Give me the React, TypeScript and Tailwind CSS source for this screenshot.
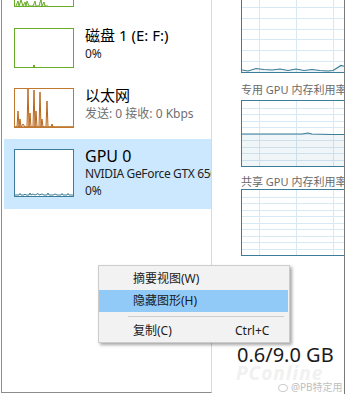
const FONT = "font-['Noto_Sans','Noto_Sans_CJK_SC',sans-serif]";

function GridChart({
  height,
  hLines,
  line,
  fill,
}: {
  height: number;
  hLines: number[];
  line?: string;
  fill?: string;
}) {
  const inner = height - 2;
  return (
    <div
      className="w-[120px] shrink-0 border border-[#3b7c98] bg-white"
      style={{ height }}
    >
      <svg width="118" height={inner} className="block">
        {hLines.map((y) => (
          <line key={`h${y}`} x1="0" x2="118" y1={y} y2={y} stroke="#d7e9f4" strokeWidth="1" />
        ))}
        {[17.5, 54.5, 91.5].map((x) => (
          <line key={`v${x}`} x1={x} x2={x} y1="0" y2={inner} stroke="#d7e9f4" strokeWidth="1" />
        ))}
        {fill && <polygon points={fill} fill="#3b7c98" fillOpacity="0.08" />}
        {line && <polyline points={line} fill="none" stroke="#3b7c98" strokeWidth="1.2" />}
      </svg>
    </div>
  );
}

function Spark({
  w,
  h,
  color,
  children,
}: {
  w: number;
  h: number;
  color: string;
  children?: React.ReactNode;
}) {
  return (
    <div className="shrink-0 border bg-white" style={{ width: w, height: h, borderColor: color }}>
      <svg width={w - 2} height={h - 2} className="block">
        {children}
      </svg>
    </div>
  );
}

const ethPts =
  "0,38 2,38 3,22 4,38 5,30 6,38 8,35 10,38 12,38 13,0 14,38 15,24 16,38 18,38 19,1 20,38 21,22 22,38 24,38 25,3 26,38 27,30 28,38 31,38 32,12 33,38 36,38 37,35 38,38 58,38";

const gpuPts =
  "0,45 4,45 5,43.5 6,45 9,45 10,44 11,45 14,45 15,43 16,45 18,44 20,45 23,43.5 24,45 27,44 29,45 32,45 33,43 34,45 38,45 40,44 42,45 46,45 47,43.5 48,45 52,45 53,43.5 54,45 58,45";

const greenPts =
  "1,38 3,33 4,38 6,32 8,38 10,34 11,38 12,33 14,38 18,38 20,33 21,38 24,38 26,31 27,38 29,34 30,38 33,38";

const chart1Line =
  "0,87 6,88 14,85.5 22,86.5 30,87 38,86 46,87.5 54,86 62,87.5 70,86.5 78,87.5 86,88 91,87.5 95,85 99,82.5 103,83.5 118,84";

const chart2Line =
  "0,33 20,33 40,33 60,33 66,32 70,33 90,33.5 118,33.5";

function range(start: number, step: number, count: number) {
  return Array.from({ length: count }, (_, i) => Math.round(start - step * i) + 0.5);
}

export default function App() {
  return (
    <div className={`relative flex h-[394px] w-[349px] overflow-hidden bg-white ${FONT}`}>
      {/* left list */}
      <div className="ml-px flex h-[393px] w-[211px] shrink-0 flex-col overflow-hidden border-b border-l border-r border-b-[#8c8c8c] border-l-[#8c8c8c] border-r-[#d9d9d9]">
        <div className="-mt-[33px] flex pl-[12px]">
          <Spark w={60} h={40} color="#6aac2a">
            <polyline points={greenPts} fill="#6aac2a" fillOpacity="0.15" stroke="#6aac2a" strokeWidth="1" />
          </Spark>
        </div>

        <div className="mt-[21px] flex items-start gap-[11px] pl-[12px]">
          <Spark w={60} h={40} color="#6aac2a">
            <rect x="18" y="36" width="2" height="2" fill="#6aac2a" />
          </Spark>
          <div className="-mt-[2px] whitespace-nowrap">
            <div className="text-[15px] leading-[18px] text-black">磁盘 1 (E: F:)</div>
            <div className="mt-[2px] text-[12px] leading-[16px] text-[#222]">0%</div>
          </div>
        </div>

        <div className="mt-[20px] flex items-start gap-[11px] pl-[12px]">
          <Spark w={60} h={40} color="#c0782e">
            <polygon points={ethPts} fill="#c0782e" fillOpacity="0.12" stroke="#b8661c" strokeWidth="1" />
          </Spark>
          <div className="-mt-[2px] whitespace-nowrap">
            <div className="text-[15px] leading-[18px] text-black">以太网</div>
            <div className="mt-[2px] text-[12px] leading-[16px] text-[#6f6f6f]">发送: 0 接收: 0 Kbps</div>
          </div>
        </div>

        <div className="ml-[2px] mt-[11px] flex items-start gap-[11px] overflow-hidden bg-[#cce8ff] py-[10px] pl-[10px]">
          <Spark w={60} h={48} color="#3b7c98">
            <polyline points={gpuPts} fill="none" stroke="#3b7c98" strokeWidth="1" />
          </Spark>
          <div className="-mt-[2px] whitespace-nowrap">
            <div className="text-[16px] leading-[18px] text-black">GPU 0</div>
            <div className="text-[12px] leading-[17px] tracking-[-0.35px] text-[#222]">NVIDIA GeForce GTX 650</div>
            <div className="text-[12px] leading-[17px] text-[#222]">0%</div>
          </div>
        </div>
      </div>

      {/* right detail panel */}
      <div className="flex h-[394px] w-[133px] shrink-0 flex-col overflow-hidden border-r border-[#7a7a7a]">
        <div className="flex flex-col pl-[29px]">
          <div className="-mt-[18px]">
            <GridChart height={91} hLines={range(78, 10.8, 8)} line={chart1Line} fill={`0,89 ${chart1Line} 118,89`} />
          </div>
          <div className="mt-[10px] whitespace-nowrap text-[11px] leading-[14px] text-[#6a6a6a]">专用 GPU 内存利用率</div>
          <div className="mt-[3px]">
            <GridChart height={67} hLines={range(58.5, 6.5, 9)} line={chart2Line} fill={`0,65 ${chart2Line} 118,65`} />
          </div>
          <div className="mt-[8px] whitespace-nowrap text-[11px] leading-[14px] text-[#6a6a6a]">共享 GPU 内存利用率</div>
          <GridChart height={67} hLines={range(58.5, 6.5, 9)} />
        </div>
        <div className="mt-[89px] whitespace-nowrap pl-[25px] text-[20px] leading-[20px] text-[#1a1a1a]">0.6/9.0 GB</div>
      </div>

      {/* watermark */}
      <div className="pointer-events-none absolute left-[236px] top-[365px] text-[19px] font-bold italic leading-[16px] tracking-[1px] text-[#f1f1f1]">
        PConline
      </div>
      <div className="pointer-events-none absolute left-[278px] top-[382px] flex items-center gap-[3px] whitespace-nowrap text-[10px] leading-[11px] text-[#c0c0c0]">
        <span className="inline-block h-[8px] w-[10px] rounded-full border border-[#cccccc]" />
        <span>@PB特定用</span>
      </div>

      {/* context menu */}
      <div className="absolute left-[98px] top-[265px] h-[78px] w-[192px] border border-[#cccccc] bg-[#f2f2f2] pt-[2px] text-[12px] text-[#1a1a1a] shadow-[2px_2px_3px_rgba(0,0,0,0.35)]">
        <div className="flex h-[22px] items-center pl-[34px]">摘要视图(W)</div>
        <div className="mr-[1px] flex h-[22px] items-center bg-[#91c9f7] pl-[34px]">隐藏图形(H)</div>
        <div className="flex h-[8px] items-center">
          <div className="ml-[29px] mr-[5px] h-px flex-1 bg-[#cccccc]" />
        </div>
        <div className="flex h-[22px] items-center pl-[34px]">
          <span className="w-[102px]">复制(C)</span>
          <span>Ctrl+C</span>
        </div>
      </div>
    </div>
  );
}
